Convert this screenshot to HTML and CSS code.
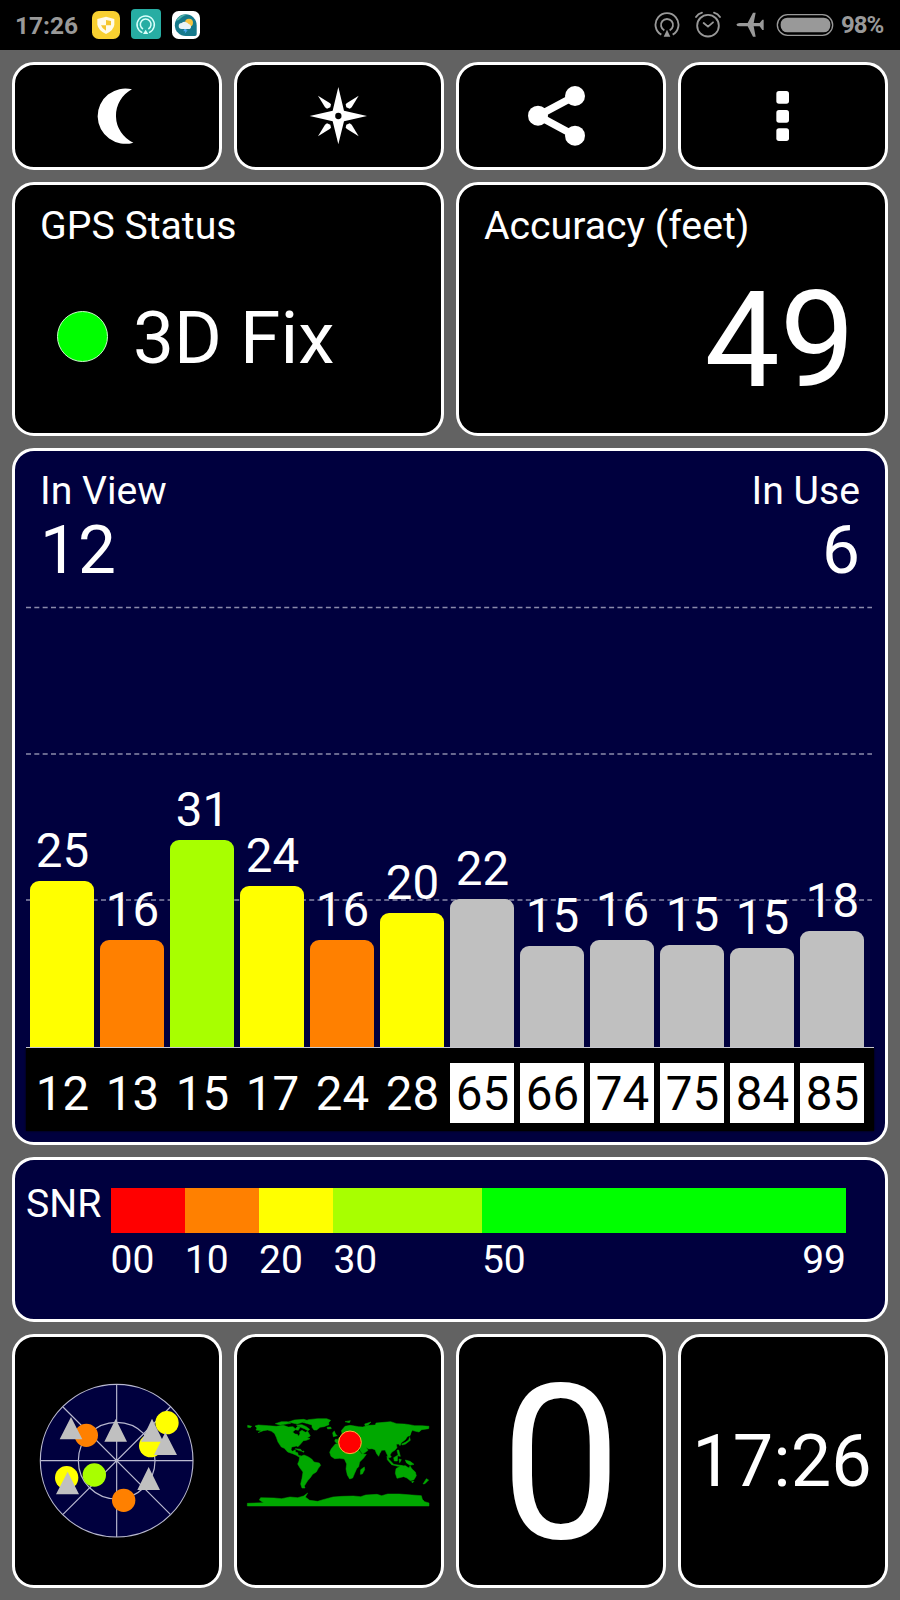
FILE: index.html
```html
<!DOCTYPE html>
<html lang="en">
<head>
<meta charset="utf-8">
<title>GPS Status</title>
<link rel="stylesheet" href="styles.css">
</head>
<body>
<header class="status">
  <span class="clock">17:26</span>
  <svg class="app-icon" width="28" height="28" viewBox="276 33 84 84">
    <rect x="276" y="33" width="84" height="84" rx="20" fill="#f8d031"/>
    <path d="M318 50L343 57V74Q341 91 318 102Q295 91 292 74V57Z" fill="#fffbe8"/>
    <path d="M318 60V76H303Q306 86 318 92V76H333V63Z" fill="#f5c62c"/>
  </svg>
  <svg class="app-icon cast" width="30" height="30" viewBox="393 28 90 90">
    <rect x="393" y="28" width="90" height="90" rx="12" fill="#27ada3"/>
    <g fill="none" stroke="#d8fffa" stroke-width="4.5">
      <path d="M427 99A26 26 0 1 1 447 99"/>
      <path d="M429 88A16 16 0 1 1 445 88"/>
    </g>
    <path d="M437 90L445 103H429Z" fill="#d8fffa"/>
  </svg>
  <svg class="app-icon" width="28" height="28" viewBox="516 33 84 84">
    <rect x="516" y="33" width="84" height="84" rx="20" fill="#fff"/>
    <path d="M557 43A33 33 0 0 1 590 76V103Q590 108 585 108H557A32 32 0 0 1 557 43Z" fill="#16798b"/>
    <path d="M528 62Q540 42 562 44Q546 48 537 60Z" fill="#51b6ac"/>
    <circle cx="567" cy="68" r="12" fill="#f6c43f"/>
    <path d="M545 87A9 9 0 0 1 545 69A14 14 0 0 1 566 72A8 8 0 0 1 569 87Z" fill="#e8f3f6"/>
    <path d="M553 87L550 94H556L554 101L563 91H558L560 87Z" fill="#4aa8ef"/>
  </svg>
  <span class="spacer"></span>
  <svg class="cast-icon" width="26" height="28" viewBox="43 33 78 84">
    <g fill="none" stroke="#999" stroke-width="5.5">
      <path d="M65 104A34.500 34.500 0 1 1 99 104"/>
      <path d="M74 91A18 18 0 1 1 90 91"/>
    </g>
    <path d="M82 89L92 110H72Z" fill="#999"/>
  </svg>
  <svg class="alarm-icon" width="28" height="28" viewBox="163 33 84 84" fill="none" stroke="#999" stroke-width="5.500" stroke-linecap="round">
    <circle cx="205" cy="77" r="32.500"/>
    <path d="M192 69L205 80L220 67M169 51Q175 41 187 38M241 51Q235 41 223 38"/>
  </svg>
  <svg class="plane-icon" width="28" height="28" viewBox="290 33 84 84">
    <path d="M291 74Q293 69 301 69H325L341 38H349L343 69H361L369 59H373V90H369L361 79H343L349 110H341L325 79H301Q293 79 291 74Z" fill="#999"/>
  </svg>
  <svg class="battery-icon" width="58" height="24" viewBox="408 39 174 72">
    <rect x="412" y="44" width="166" height="62" rx="31" fill="none" stroke="#999" stroke-width="4"/>
    <rect x="422" y="53" width="149" height="44" rx="20" fill="#999"/>
  </svg>
  <span class="percent">98%</span>
</header>

<main class="screen">
  <section class="row toolbar">
    <button class="card"><svg width="60" height="60" viewBox="261 258 180 180"><path d="M396 268A83 83 0 1 0 400 428A89 89 0 0 1 396 268Z" fill="#fff"/></svg></button>
    <button class="card"><svg width="60" height="60" viewBox="27 108 180 180">
      <path d="M115 111L132 182L201 198L132 214L115 283L98 214L29 198L98 182Z" fill="#fff"/>
      <g fill="#fff">
        <path d="M54 137L89 159L93 163L91 172L81 176L75 172Z"/>
        <path d="M176 137L141 159L137 163L139 172L149 176L155 172Z"/>
        <path d="M54 259L89 237L93 233L91 224L81 220L75 224Z"/>
        <path d="M176 259L141 237L137 233L139 224L149 220L155 224Z"/>
      </g>
      <circle cx="115" cy="198" r="9.500" fill="#000"/>
    </svg></button>
    <button class="card"><svg width="72" height="60" viewBox="675 108 216 180">
      <path d="M825 138L714 197L825 257" fill="none" stroke="#fff" stroke-width="22"/>
      <g fill="#fff"><circle cx="825" cy="138" r="30"/><circle cx="714" cy="197" r="30"/><circle cx="825" cy="257" r="30"/></g>
    </svg></button>
    <button class="card"><svg width="60" height="60" viewBox="339 258 180 180" fill="#fff">
      <rect x="409" y="273" width="38" height="38" rx="8"/><rect x="409" y="330" width="38" height="38" rx="8"/><rect x="409" y="385" width="38" height="38" rx="8"/>
    </svg></button>
  </section>

  <section class="row summary">
    <div class="card panel">
      <h2 class="label">GPS Status</h2>
      <div class="fix"><i class="dot"></i><span>3D Fix</span></div>
    </div>
    <div class="card panel">
      <h2 class="label">Accuracy (feet)</h2>
      <div class="accuracy">49</div>
    </div>
  </section>

  <section class="card navy signal">
    <div class="counts">
      <div><h2 class="label">In View</h2><div class="count">12</div></div>
      <div class="right"><h2 class="label">In Use</h2><div class="count">6</div></div>
    </div>
    <div class="chart">
      <svg class="grid" width="848" height="441" viewBox="0 0 848 441">
        <path d="M0 1.500H846M0 148H846M0 294H846" stroke="#8a8aab" stroke-width="1.600" stroke-dasharray="5 3.330"/>
      </svg>
      <div class="bars">
        <div class="sat"><b>25</b><i class="yellow" style="height:166px"></i></div>
        <div class="sat"><b>16</b><i class="orange" style="height:107px"></i></div>
        <div class="sat"><b>31</b><i class="lime" style="height:207px"></i></div>
        <div class="sat"><b>24</b><i class="yellow" style="height:161px"></i></div>
        <div class="sat"><b>16</b><i class="orange" style="height:107px"></i></div>
        <div class="sat"><b>20</b><i class="yellow" style="height:134px"></i></div>
        <div class="sat"><b>22</b><i class="silver" style="height:148px"></i></div>
        <div class="sat"><b>15</b><i class="silver" style="height:101px"></i></div>
        <div class="sat"><b>16</b><i class="silver" style="height:107px"></i></div>
        <div class="sat"><b>15</b><i class="silver" style="height:102px"></i></div>
        <div class="sat"><b>15</b><i class="silver" style="height:99px"></i></div>
        <div class="sat"><b>18</b><i class="silver" style="height:116px"></i></div>
      </div>
    </div>
    <div class="ids">
      <span>12</span><span>13</span><span>15</span><span>17</span><span>24</span><span>28</span>
      <span class="unused">65</span><span class="unused">66</span><span class="unused">74</span><span class="unused">75</span><span class="unused">84</span><span class="unused">85</span>
    </div>
  </section>

  <section class="card navy snr">
    <h2 class="snr-name">SNR</h2>
    <div class="scale">
      <div class="step"><i class="red"></i><span>00</span></div>
      <div class="step"><i class="orange"></i><span>10</span></div>
      <div class="step"><i class="yellow"></i><span>20</span></div>
      <div class="step"><i class="lime"></i><span>30</span></div>
      <div class="step"><i class="green"></i><span class="ends"><em>50</em><em>99</em></span></div>
    </div>
  </section>

  <section class="row tiles">
    <div class="card">
      <svg width="160" height="160" viewBox="51 63 480 480">
        <g stroke="#b9b9d0" stroke-width="3.500" fill="none">
          <circle cx="290" cy="302" r="229" fill="#00003e"/>
          <circle cx="290" cy="302" r="115"/>
          <path d="M290 73V531M61 302H519M129 141L451 463M451 141L129 463"/>
        </g>
        <circle cx="199" cy="226" r="35" fill="#ff8000"/><circle cx="311" cy="421" r="35" fill="#ff8000"/>
        <circle cx="441" cy="188" r="35" fill="#ff0"/><circle cx="392" cy="257" r="35" fill="#ff0"/><circle cx="140" cy="353" r="35" fill="#ff0"/>
        <circle cx="223" cy="345" r="35" fill="#a8ff00"/>
        <path d="M153 171L187 238H119ZM287 177L321 245H253ZM396 176L430 245H363ZM436 217L471 285H402ZM386 321L420 390H352ZM143 335L177 403H108Z" fill="silver"/>
      </svg>
    </div>
    <div class="card">
      <svg width="186" height="92" viewBox="33 45 558 276" fill="#00a800" stroke="#00a800" stroke-width="1.500">
        <path d="M60 78L70 75L100 77L124 79L145 76L160 81L174 80L181 86L188 79L195 82L190 91L181 89L173 96L180 102L187 103L190 109L195 102L194 95L201 91L211 97L218 94L226 108L217 113L225 116L214 121L205 122L196 133L189 140L184 138L176 140L170 141L168 150L173 154L181 149L181 156L188 158L190 166L198 168L192 171L184 166L173 161L158 156L148 145L139 141L129 126L124 112L119 101L110 94L98 90L85 92L69 98L79 92L63 90L66 84Z"/>
        <path d="M38 76L50 79L46 83L38 82ZM121 71L139 65L157 65L167 70L149 73L136 75ZM160 66L178 60L206 58L216 61L202 67L187 72L176 70ZM184 75L201 74L214 80L224 88L219 92L208 86L197 82ZM181 146L197 148L201 154L190 151ZM201 154L207 153L206 157Z"/>
        <path d="M203 67L220 59L248 56L275 56L287 61L281 68L282 74L267 80L255 82L245 90L237 90L231 82L231 75L218 71Z"/>
        <path d="M194 170L207 165L219 170L230 177L237 186L253 189L257 196L250 205L244 216L233 223L226 233L219 241L215 247L208 258L210 264L201 264L197 252L201 235L204 216L195 204L188 192L192 183Z"/>
        <path d="M276 82L287 81L289 86L278 87ZM293 98L298 93L302 103L307 107L295 110ZM330 65L346 62L343 68ZM389 72L408 66L400 74L391 78Z"/>
        <path d="M309 116L318 108L321 99L319 92L330 79L345 76L359 78L370 80L383 81L401 76L421 75L423 69L447 67L467 65L485 71L508 72L523 74L539 77L560 77L582 79L581 86L560 89L552 96L542 94L532 91L528 98L525 106L517 110L511 119L499 128L495 137L491 132L484 133L486 143L480 150L470 157L465 165L469 171L461 174L456 163L450 150L440 151L434 161L431 169L425 161L420 149L411 146L401 147L393 142L399 151L383 163L376 153L370 139L363 139L351 135L340 133L319 131L304 129L299 123L302 117L309 119Z"/>
        <path d="M301 132L319 129L329 133L350 134L365 138L371 150L380 162L394 163L386 174L374 186L371 200L365 206L359 220L353 234L344 237L337 225L333 207L335 192L328 177L314 175L299 176L288 169L284 157L289 146ZM388 201L389 209L382 222L376 223L377 209Z"/>
        <path d="M483 206L496 198L511 197L517 201L522 204L525 198L531 207L541 216L544 227L537 239L526 242L516 234L506 230L486 235L481 220ZM574 236L581 240L570 251L564 252ZM530 244L537 244L532 249Z"/>
        <path d="M456 168L463 179L476 193L503 197L489 199L470 194L457 179ZM476 173L488 166L487 183L478 183ZM492 177L499 179L494 188ZM511 180L525 184L537 193L525 196L514 188ZM486 151L491 150L496 169L490 168ZM500 132L511 127L521 120L524 112L526 121L512 132L502 135ZM520 94L527 98L524 109Z"/>
        <path d="M37 310L86 308L73 300L77 293L117 294L140 296L165 291L188 293L206 288L218 279L211 291L224 301L248 304L264 299L294 291L322 289L355 288L377 290L392 285L426 283L440 287L458 282L493 282L531 285L559 287L562 298L569 305L582 309V318H37Z"/>
        <circle cx="345" cy="127" r="34" fill="#f00" stroke="#ffb43c" stroke-width="3"/>
      </svg>
    </div>
    <div class="card zero">0</div>
    <div class="card time">17:26</div>
  </section>
</main>
</body>
</html>
```
FILE: styles.css
```css
* { box-sizing: border-box; }
body { margin: 0; width: 900px; height: 1600px; background: #626262; color: #fff; font-family: Roboto, sans-serif; overflow: hidden; }
svg { display: block; flex: none; }
h2 { margin: 0; font-weight: 400; }
b, i, em { font-weight: 400; font-style: normal; }

.status { height: 50px; background: #000; color: #999; display: flex; align-items: center; padding: 0 16px 0 15px; font-size: 24.5px; font-weight: 700; line-height: 50px; }
.clock { width: 77px; padding-top: 1px; }
.app-icon { margin-right: 11px; }
.app-icon.cast { margin-bottom: 2px; }
.spacer { flex: 1; }
.alarm-icon { margin-left: 14px; }
.plane-icon { margin-left: 14px; }
.battery-icon { margin-left: 12px; }
.percent { width: 43px; margin-left: 7px; font-size: 24px; letter-spacing: -1px; font-weight: 700; white-space: nowrap; }

.screen { padding: 12px; display: flex; flex-direction: column; gap: 12px; }
.row { display: grid; gap: 12px; }
.toolbar { grid-template-columns: repeat(4, 1fr); grid-template-rows: 108px; }
.summary { grid-template-columns: 1fr 1fr; grid-template-rows: 254px; }
.tiles { grid-template-columns: repeat(4, 1fr); grid-template-rows: 254px; }
.card { background: #000; border: 3px solid #fff; border-radius: 22px; color: #fff; padding: 0; font-family: inherit; min-width: 0; }
.card.navy { background: #00003e; }
.toolbar .card, .tiles .card { display: flex; align-items: center; justify-content: center; }

.panel { padding: 21px 25px 0; }
.label { font-size: 39.2px; line-height: 40px; white-space: nowrap; }
.fix { display: flex; align-items: center; gap: 25px; margin-top: 56px; padding-left: 17px; font-size: 73px; line-height: 72px; }
.dot { width: 51px; height: 51px; border-radius: 50%; background: #0f0; border: 1.5px solid #c8ffc8; margin-bottom: 4px; }
.accuracy { text-align: right; font-size: 134px; line-height: 136px; margin-top: 27px; padding-right: 5px; }

.signal { height: 697px; padding: 20px 11px 0; display: flex; flex-direction: column; }
.counts { display: flex; justify-content: space-between; padding: 0 14px; height: 135px; }
.count { font-size: 67.5px; line-height: 69px; margin-top: 4px; }
.right { text-align: right; }
.chart { height: 442px; display: grid; grid-template-rows: 441px; border-bottom: 1px solid #c8c8d0; }
.grid, .bars { grid-area: 1 / 1; }
.bars { z-index: 1; display: flex; align-items: flex-end; gap: 6px; padding-left: 4px; }
.sat { width: 64px; }
.sat b { display: block; text-align: center; font-size: 47.5px; line-height: 48px; padding-left: 1px; margin-bottom: 6px; }
.sat i { display: block; border-radius: 9px 9px 0 0; }
.ids { height: 83px; background: #000; box-shadow: 0 0 2px #000; clip-path: inset(0 -3px -3px -3px); display: flex; gap: 6px; padding: 15px 4px 8px; font-size: 47.5px; line-height: 63px; text-align: center; }
.ids span { width: 64px; height: 60px; padding-left: 1px; }
.ids .unused { background: #fff; color: #000; }

.yellow { background: #ff0; }
.orange { background: #ff8000; }
.lime { background: #a8ff00; }
.silver { background: silver; }
.red { background: #f00; }
.green { background: #0f0; }

.snr { height: 165px; padding: 28px 0 0 11px; display: flex; font-size: 39px; line-height: 40px; }
.snr-name { width: 84.5px; font-size: 39.2px; margin-top: -4px; }
.scale { width: 735.5px; display: grid; grid-template-columns: 10fr 10fr 10fr 20fr 49fr; }
.step i { display: block; height: 45px; }
.step span { display: block; margin-top: 7px; }
.step .ends { display: flex; justify-content: space-between; }

.zero { font-size: 216px; line-height: 240px; }
.tiles .zero { padding-top: 8px; }
.tiles .time { font-size: 72px; line-height: 248px; padding: 2px 2px 0 0; }
```
